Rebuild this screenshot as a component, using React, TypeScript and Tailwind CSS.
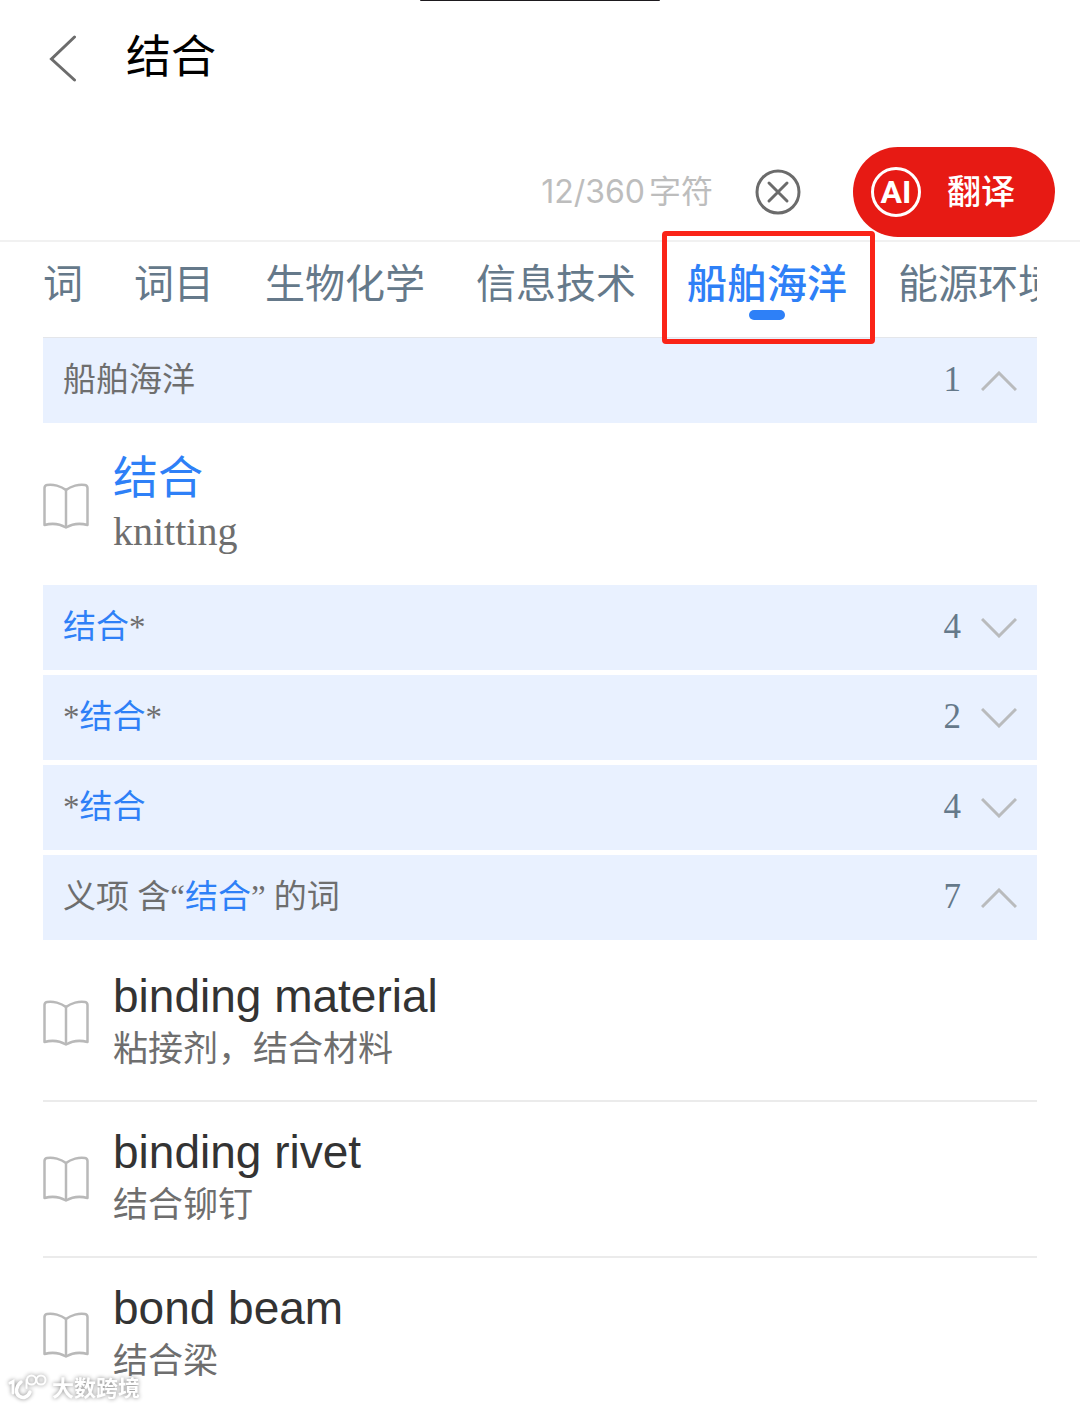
import { useState } from "react";
import clsx from "clsx";

type Entry = { word: string; meaning: string };

const KEYWORD = "结合";

const tabs = ["词", "词目", "生物化学", "信息技术", "船舶海洋", "能源环境"];

const related: Entry[] = [
  { word: "binding material", meaning: "粘接剂，结合材料" },
  { word: "binding rivet", meaning: "结合铆钉" },
  { word: "bond beam", meaning: "结合梁" },
];

const groups = [
  { title: "船舶海洋", count: 1, open: true, entries: [{ word: KEYWORD, meaning: "knitting" }] },
  { title: "结合*", count: 4, open: false, entries: [] as Entry[] },
  { title: "*结合*", count: 2, open: false, entries: [] as Entry[] },
  { title: "*结合", count: 4, open: false, entries: [] as Entry[] },
  { title: "义项 含“结合” 的词", count: 7, open: true, entries: related },
];

function BookIcon() {
  return (
    <svg className="h-[46px] w-[46px] shrink-0" viewBox="0 0 46 46" fill="none" stroke="#b9b9b9" strokeWidth="2.5" strokeLinejoin="round" aria-hidden="true">
      <path d="M23 7C18 3 10 1 4 2Q1.500 2.500 1.500 5V42C9 40 17 41 23 44.500C29 41 37 40 44.500 42V5Q44.500 2.500 42 2C36 1 28 3 23 7Z" />
      <path d="M23 7V44" />
    </svg>
  );
}

function Chevron({ open }: { open: boolean }) {
  return (
    <svg className="h-5 w-9" viewBox="0 0 36 20" fill="none" stroke="#b9bbbd" strokeWidth="3" aria-hidden="true">
      <path d={open ? "M1 19L18 2L35 19" : "M1 1L18 18L35 1"} />
    </svg>
  );
}

// Colours the searched word inside a group title
function Highlight({ text }: { text: string }) {
  const parts = text.split(KEYWORD);
  return (
    <>
      {parts.map((part, i) => (
        <span key={i}>
          {i > 0 && <span className="text-[#2e80f7]">{KEYWORD}</span>}
          {part}
        </span>
      ))}
    </>
  );
}

function EntryRow({ entry }: { entry: Entry }) {
  const exact = entry.word === KEYWORD;
  return (
    <li className="flex h-[156px] items-start gap-6 border-b-2 border-[#ebebeb] last:border-transparent">
      <div className="pt-[54px]">
        <BookIcon />
      </div>
      <div className="pt-[21px]">
        <div className={clsx("leading-[58px]", exact ? "text-[45px] text-[#2e80f7]" : "text-[46px] text-[#333]")}>{entry.word}</div>
        <div
          className={clsx(
            "leading-[48px] text-[#6e6e6e]",
            exact ? "font-['Liberation_Serif','Noto_Sans_CJK_SC',serif] text-[40px]" : "text-[35px]"
          )}
        >
          {entry.meaning}
        </div>
      </div>
    </li>
  );
}

export default function App() {
  const [query, setQuery] = useState(KEYWORD);
  const [active, setActive] = useState("船舶海洋");
  const [opened, setOpened] = useState(groups.map((g) => g.open));

  const toggle = (index: number) => setOpened(opened.map((v, i) => (i === index ? !v : v)));

  return (
    <div className="relative flex h-screen flex-col overflow-hidden bg-white font-['Liberation_Sans','Noto_Sans_CJK_SC',sans-serif]">
      <div className="absolute top-0 left-1/2 h-px w-60 -translate-x-1/2 rounded-b-full bg-[#1d1a1e]"></div>

      {/* Search */}
      <header className="shrink-0 border-b-2 border-[#f1f1f1]">
        <div className="flex h-[116px] items-center gap-12 px-12">
          <button type="button" aria-label="返回">
            <svg className="h-12 w-[30px]" viewBox="0 0 30 48" fill="none" stroke="#6c6c6c" strokeWidth="3" strokeLinecap="round">
              <path d="M26.500 3L3.500 25L26.500 46" />
            </svg>
          </button>
          <input
            aria-label="查询内容"
            className="h-16 min-w-0 flex-1 text-[45px] text-black outline-none"
            value={query}
            onChange={(e) => setQuery(e.target.value)}
          />
        </div>
        <div className="flex items-center justify-end pt-[31px] pr-[25px] pb-[3px]">
          <span className="flex items-center gap-1 text-[32px] text-[#bdbdbd]">
            <span className="font-[Inter,sans-serif]">12/360</span>
            <span>字符</span>
          </span>
          <button type="button" aria-label="清除" className="ml-[42px]" onClick={() => setQuery("")}>
            <svg className="h-[46px] w-[46px]" viewBox="0 0 46 46" fill="none" stroke="#6b6b6b" strokeWidth="3" strokeLinecap="round">
              <circle cx="23" cy="23" r="21" />
              <path d="M14 14L32 32M32 14L14 32" />
            </svg>
          </button>
          <button type="button" className="ml-[52px] flex h-[90px] w-[202px] items-center gap-[26px] rounded-full bg-[#e71a14] pl-[18px] text-white">
            <span className="flex h-[50px] w-[50px] items-center justify-center rounded-full border-3 border-white font-[Roboto,sans-serif] text-[32px] leading-none font-bold">
              AI
            </span>
            <span className="text-[34px] font-medium">翻译</span>
          </button>
        </div>
      </header>

      <main className="min-h-0 flex-1 px-[43px]">
        {/* Categories */}
        <nav className="relative border-b border-[#e4e6ea]">
          <div className="flex gap-[51px] overflow-hidden">
            {tabs.map((tab) => (
              <button
                key={tab}
                type="button"
                onClick={() => setActive(tab)}
                className={clsx(
                  "flex h-[95px] shrink-0 flex-col items-center pt-4 text-[40px] leading-[52px]",
                  tab === active ? "font-medium text-[#2e80f7]" : "text-[#65798a]"
                )}
              >
                {tab}
                {tab === active && <span className="h-[10px] w-9 rounded-full bg-[#2e80f7]"></span>}
              </button>
            ))}
          </div>
          <div className="pointer-events-none absolute -top-[11px] left-[619px] h-[113px] w-[213px] rounded border-5 border-[#fa2418]"></div>
        </nav>

        {/* Results */}
        <div>
          {groups.map((group, index) => (
            <section key={group.title} className={clsx(index > 1 && "mt-[5px]")}>
              <button
                type="button"
                aria-expanded={opened[index]}
                onClick={() => toggle(index)}
                className="flex h-[85px] w-full items-center justify-between bg-[#e9f1ff] px-5 font-['Liberation_Serif','Noto_Sans_CJK_SC',serif]"
              >
                <span className="text-[33px] text-[#6e6e6e]">
                  <Highlight text={group.title} />
                </span>
                <span className="flex items-center gap-5 text-[35px] text-[#65798a]">
                  {group.count}
                  <Chevron open={opened[index]} />
                </span>
              </button>
              {opened[index] && group.entries.length > 0 && (
                <ul className="pt-[6px]">
                  {group.entries.map((entry) => (
                    <EntryRow key={entry.word} entry={entry} />
                  ))}
                </ul>
              )}
            </section>
          ))}
        </div>
      </main>

      <div className="absolute bottom-0.5 left-2 flex items-center gap-1 text-white drop-shadow-[0_0_2px_#888]">
        <svg className="h-8 w-10" viewBox="0 0 40 32" fill="none" stroke="currentColor" strokeWidth="3" strokeLinecap="round" aria-hidden="true">
          <path d="M2 10L5 8.500V20" />
          <path d="M13 9C8 13 7 20 11 23C15 26 20 24 22 19" strokeWidth="3.500" />
          <path d="M18.500 15V7" strokeWidth="2" />
          <circle cx="23.500" cy="7" r="4.500" strokeWidth="2" />
          <circle cx="33" cy="7" r="4.500" strokeWidth="2" />
        </svg>
        <span className="text-[22px] leading-8 font-bold">大数跨境</span>
      </div>
    </div>
  );
}
